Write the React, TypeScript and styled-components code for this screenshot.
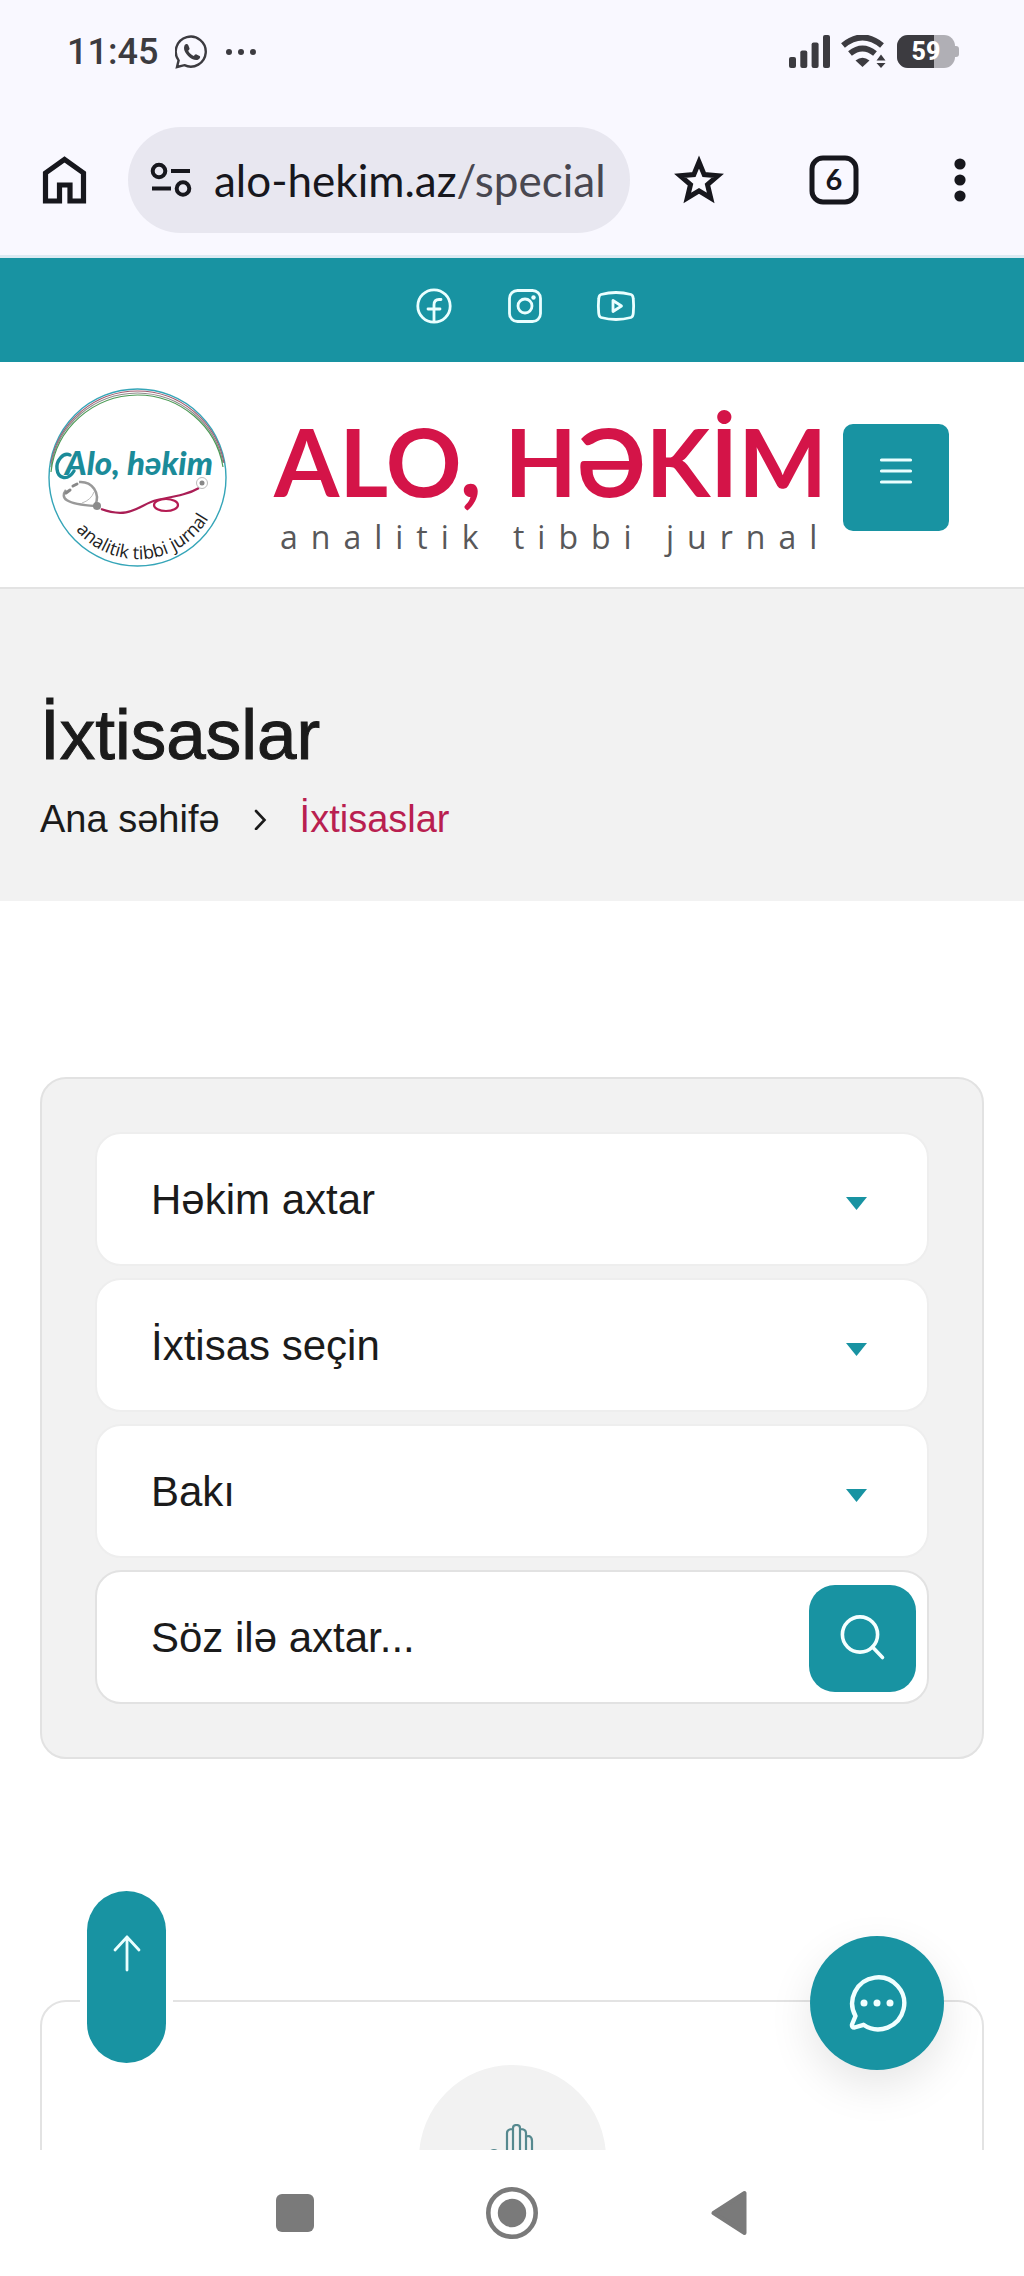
import React, { useState } from "react";
import styled, { createGlobalStyle } from "styled-components";

const teal = "#1893a2";
const ink = "#1b1b1b";
const crimson = "#d41448";

const GlobalStyle = createGlobalStyle`
  * {
    box-sizing: border-box;
  }

  body {
    margin: 0;
    background: #fff;
    color: ${ink};
    font-family: "Liberation Sans", Arial, sans-serif;
  }

  button {
    border: 0;
    padding: 0;
    background: none;
    color: inherit;
    font: inherit;
    cursor: pointer;
  }

  a {
    color: inherit;
    text-decoration: none;
  }

  svg {
    display: block;
    flex: none;
  }
`;

const Screen = styled.div`
  display: flex;
  flex-direction: column;
  height: 100vh;
`;

const StatusBar = styled.div`
  display: flex;
  flex: none;
  align-items: center;
  justify-content: space-between;
  height: 103px;
  padding: 0 65px 0 67px;
  background: #f9f8ff;
  color: #3c3b40;
`;

const StatusGroup = styled.div`
  display: flex;
  align-items: center;
  gap: ${({ $gap }: { $gap: number }) => $gap}px;
`;

const Clock = styled.span`
  font: 500 36px/40px Roboto, sans-serif;
`;

const BrowserBar = styled.div`
  display: flex;
  flex: none;
  align-items: center;
  height: 155px;
  padding: 2px 46px 0 40px;
  border-bottom: 3px solid #dceaf2;
  background: #f9f8ff;
  color: #17171d;
`;

const BrowserButton = styled.button`
  display: flex;
  flex: none;
  align-items: center;
  justify-content: center;
`;

const BrowserActions = styled.div`
  display: flex;
  flex: none;
  align-items: center;
  gap: 83px;
  margin-left: 42px;
`;

const AddressBar = styled.button`
  display: flex;
  flex: 1;
  align-items: center;
  gap: 22px;
  min-width: 0;
  height: 106px;
  margin-left: 38px;
  padding: 0 22px;
  overflow: hidden;
  border-radius: 53px;
  background: #e8e7f0;
  font: 400 44px/56px Lato, sans-serif;
  white-space: nowrap;
`;

const UrlPath = styled.span`
  color: #484750;
`;

const Page = styled.div`
  position: relative;
  flex: 1;
  min-height: 0;
  overflow: hidden;
`;

const TopBar = styled.div`
  display: flex;
  align-items: center;
  justify-content: center;
  gap: 51px;
  height: 104px;
  padding: 0 0 8px 26px;
  background: ${teal};
  color: #eaffff;
`;

const Header = styled.header`
  display: flex;
  align-items: center;
  justify-content: space-between;
  height: 227px;
  padding: 6px 75px 0 47px;
  border-bottom: 2px solid #e3e3e3;
`;

const Brand = styled.a`
  display: flex;
  align-items: center;
  gap: 46px;
`;

const Wordmark = styled.div`
  display: flex;
  flex-direction: column;
  gap: 4px;
  padding-top: 14px;
  white-space: nowrap;
`;

const BrandName = styled.span`
  color: ${crimson};
  font: 700 94px/100px Lato, sans-serif;
`;

const BrandTagline = styled.span`
  padding-left: 6px;
  color: #58585a;
  font: 400 32px/44px "Open Sans", sans-serif;
  letter-spacing: 13px;
`;

const MenuButton = styled.button`
  display: flex;
  flex: none;
  align-items: center;
  justify-content: center;
  width: 106px;
  height: 107px;
  padding-bottom: 14px;
  border-radius: 10px;
  background: ${teal};
  color: #eaffff;
`;

const Hero = styled.section`
  padding: 104px 40px 55px;
  background: #f2f2f2;
`;

const Title = styled.h1`
  margin: 0 0 15px;
  font-size: 71px;
  font-weight: 400;
  line-height: 84px;
  -webkit-text-stroke: 1px currentColor;
`;

const Breadcrumb = styled.nav`
  display: flex;
  align-items: center;
  gap: 33px;
  font-size: 38px;
  line-height: 54px;
`;

const Current = styled.span`
  color: #b91f50;
`;

const Main = styled.main`
  padding: 176px 40px 0;
`;

const SearchPanel = styled.form`
  display: flex;
  flex-direction: column;
  gap: 12px;
  padding: 53px;
  border: 2px solid #e2e2e2;
  border-radius: 26px;
  background: #f2f2f2;
`;

const SelectBox = styled.div`
  display: grid;
  align-items: center;

  > * {
    grid-area: 1 / 1;
  }

  > svg {
    justify-self: end;
    margin: 9px 62px 0 0;
    pointer-events: none;
  }
`;

const Select = styled.select`
  appearance: none;
  width: 100%;
  height: 134px;
  padding: 2px 100px 0 54px;
  border: 2px solid #eee;
  border-radius: 26px;
  background: #fff;
  color: ${ink};
  font: 400 42px/54px "Liberation Sans", Arial, sans-serif;
`;

const SearchField = styled.div`
  display: flex;
  align-items: center;
  height: 134px;
  padding: 2px 11px 0 54px;
  border: 2px solid #e2e2e2;
  border-radius: 26px;
  background: #fff;
`;

const SearchInput = styled.input`
  flex: 1;
  min-width: 0;
  padding: 0;
  border: 0;
  outline: 0;
  background: none;
  color: ${ink};
  font: 400 42px/54px "Liberation Sans", Arial, sans-serif;

  &::placeholder {
    color: ${ink};
    opacity: 1;
  }
`;

const SearchButton = styled.button`
  display: flex;
  flex: none;
  align-items: center;
  justify-content: center;
  width: 107px;
  height: 107px;
  border-radius: 26px;
  background: ${teal};
  color: #f4ffff;
`;

const SpecialtyCard = styled.article`
  display: flex;
  justify-content: center;
  height: 420px;
  margin-top: 241px;
  padding-top: 63px;
  border: 2px solid #e3e3e3;
  border-radius: 26px;
`;

const SpecialtyIcon = styled.div`
  display: flex;
  align-items: center;
  justify-content: center;
  width: 187px;
  height: 187px;
  padding-top: 6px;
  border-radius: 50%;
  background: #f2f2f2;
`;

const ScrollTop = styled.button`
  position: absolute;
  bottom: 87px;
  left: 87px;
  display: flex;
  justify-content: center;
  width: 79px;
  height: 172px;
  padding-top: 44px;
  border-radius: 40px;
  background: ${teal};
  box-shadow: 0 0 0 7px #fff;
  color: #eaffff;
`;

const ChatButton = styled.button`
  position: absolute;
  right: 80px;
  bottom: 80px;
  display: flex;
  align-items: center;
  justify-content: center;
  width: 134px;
  height: 134px;
  border-radius: 50%;
  background: ${teal};
  box-shadow: 0 16px 44px rgba(0, 0, 0, 0.1);
  color: #f0ffff;
`;

const SystemNav = styled.nav`
  display: flex;
  flex: none;
  align-items: center;
  justify-content: center;
  gap: 157px;
  height: 126px;
  background: #fff;
  color: #7a7a7a;
`;

const SystemButton = styled.button`
  display: flex;
  align-items: center;
  justify-content: center;
  width: 60px;
  height: 60px;
`;

const WhatsAppIcon = () => (
  <svg width="34" height="34" viewBox="0 0 34 34" fill="none">
    <path
      d="M2 32 3.6 25.4A15 15 0 1 1 9.4 30.2Z"
      stroke="currentColor"
      strokeWidth="2.4"
    />
    <path
      d="M9.5 10.5c1-2 3-2 3.8-.3l1.2 3c.4 1-.9 2-1.3 2.6 1.2 2.4 3 4 5.6 5.1.8-.6 1.5-2 2.7-1.5l3.1 1.5c1.5.8-.3 3.6-2.3 4.1-5.2 1-13.5-6.5-13.3-12 .1-1 .2-1.8.5-2.5Z"
      fill="currentColor"
    />
  </svg>
);

const DotsIcon = () => (
  <svg width="30" height="8" viewBox="0 0 30 8" fill="currentColor">
    <circle cx="3" cy="4" r="3" />
    <circle cx="15" cy="4" r="3" />
    <circle cx="27" cy="4" r="3" />
  </svg>
);

const SignalIcon = () => (
  <svg width="42" height="33" viewBox="0 0 42 33" fill="currentColor">
    <rect y="22" width="7" height="11" rx="2" />
    <rect x="11.3" y="15.5" width="7" height="17.5" rx="2" />
    <rect x="22.6" y="7.5" width="7" height="25.5" rx="2" />
    <rect x="34" width="7" height="33" rx="2" />
  </svg>
);

const WifiIcon = () => (
  <svg width="46" height="33" viewBox="0 0 46 33" fill="none">
    <path d="M2 10.5Q21.5-5.5 41 10.5" stroke="currentColor" strokeWidth="6" />
    <path d="M9 18.5Q21.5 8.5 34 18.5" stroke="currentColor" strokeWidth="6" />
    <path d="M14.5 25.5Q21.500 20 28.5 25.5L21.5 32Z" fill="currentColor" />
    <path d="M35.5 25.5 40 19.5 44.5 25.5ZM35.5 28 40 33 44.5 28Z" fill="currentColor" />
  </svg>
);

const BatteryIcon = () => (
  <svg width="62" height="33" viewBox="0 0 62 33">
    <path d="M58 11h1a3 3 0 0 1 3 3v5a3 3 0 0 1-3 3h-1Z" fill="#b0afb5" />
    <rect width="58" height="33" rx="11" fill="#b0afb5" />
    <path d="M11 0H37V33H11A11 11 0 0 1 0 22V11A11 11 0 0 1 11 0Z" fill="#3c3b40" />
    <text x="29" y="25" fill="#fff" fontFamily="Roboto" fontSize="25" fontWeight="800" textAnchor="middle">
      59
    </text>
  </svg>
);

const HomeIcon = () => (
  <svg width="50" height="50" viewBox="0 0 50 50" fill="none" stroke="currentColor" strokeWidth="5.2">
    <path d="M5.5 46V18L24.5 4.5 43.5 18V46H30V30H19.5V46Z" />
  </svg>
);

const TuneIcon = () => (
  <svg width="42" height="36" viewBox="0 0 42 36" fill="none" stroke="currentColor" strokeWidth="4">
    <circle cx="9" cy="9" r="6.3" />
    <circle cx="33" cy="26.5" r="6.3" />
    <path d="M21 9H40M2 26.5H21" />
  </svg>
);

const StarIcon = () => (
  <svg width="54" height="52" viewBox="0 0 54 52" fill="none" stroke="currentColor" strokeWidth="5">
    <path d="m27 8 5.2 12.6 13.600 1.100-10.300 8.900 3.200 13.300L27 36.800 15.300 43.900l3.200-13.300-10.300-8.900 13.600-1.100Z" />
  </svg>
);

const TabsIcon = () => (
  <svg width="50" height="50" viewBox="0 0 50 50" fill="none">
    <rect x="3" y="3" width="44" height="44" rx="11" stroke="currentColor" strokeWidth="5" />
    <text x="25" y="35" fill="currentColor" fontFamily="Lato" fontSize="29" fontWeight="700" textAnchor="middle">
      6
    </text>
  </svg>
);

const MoreIcon = () => (
  <svg width="36" height="46" viewBox="0 0 36 46" fill="currentColor">
    <circle cx="18" cy="7" r="5.6" />
    <circle cx="18" cy="23" r="5.6" />
    <circle cx="18" cy="39" r="5.6" />
  </svg>
);

const FacebookIcon = () => (
  <svg width="40" height="40" viewBox="0 0 40 40" fill="none" stroke="currentColor" strokeWidth="2.8" strokeLinecap="round">
    <circle cx="20" cy="20" r="16.2" />
    <path d="M27 13.5H25Q20 13.5 20 19V35.5M14 23H26" />
  </svg>
);

const InstagramIcon = () => (
  <svg width="40" height="40" viewBox="0 0 40 40" fill="none" stroke="currentColor" strokeWidth="2.8">
    <rect x="4.5" y="4.5" width="31" height="31" rx="8" />
    <circle cx="20" cy="20" r="7" />
    <circle cx="28.5" cy="11.5" r="2.2" fill="currentColor" stroke="none" />
  </svg>
);

const YoutubeIcon = () => (
  <svg width="40" height="40" viewBox="0 0 40 40" fill="none" stroke="currentColor" strokeWidth="2.8" strokeLinejoin="round">
    <path d="M5 8.5Q20 4.5 35 8.5Q37 9 37.3 13Q38 20 37.3 27Q37 31 35 31.5Q20 35.5 5 31.5Q3 31 2.7 27Q2 20 2.7 13Q3 9 5 8.500Z" />
    <path d="M17 14.5V25.5L25.5 20Z" />
  </svg>
);

const Emblem = () => (
  <svg width="181" height="181" viewBox="0 0 181 181" fill="none">
    <defs>
      <path id="tagline-arc" d="M29 143A81 81 0 0 0 170 110" />
    </defs>
    <circle cx="90.5" cy="90.5" r="88.5" stroke="#35a5b8" strokeWidth="1.4" />
    <path d="M4 76A88 88 0 0 1 90.5 4A88 88 0 0 1 177 76" stroke="#a05a6e" strokeWidth="1.2" />
    <path d="M4 80A88 86 0 0 1 90.5 6A88 86 0 0 1 176 76" stroke="#8a8a8a" strokeWidth="1.2" />
    <path d="M4 85A88 86 0 0 1 90.5 8A87 86 0 0 1 176 80" stroke="#4b9a55" strokeWidth="1.2" />
    <text x="18" y="88" fill="#1b8b99" fontFamily="Lato" fontSize="33" fontStyle="italic" fontWeight="900">
      Alo, həkim
    </text>
    <path
      d="M23 68C16 65 9 74 10 82 11 92 21 94 27 84"
      stroke="#1b8b99"
      strokeWidth="3.4"
      strokeLinecap="round"
    />
    <path d="M19 103C13 111 18 117 48 119C54 106 45 94 32 95" stroke="#999" strokeWidth="2.5" />
    <path d="M35 116Q44 113 47 105" stroke="#bbb" />
    <path d="m19 106 4-3M26 99l4-2" stroke="#888" strokeWidth="3" strokeLinecap="round" />
    <circle cx="50" cy="119" r="4" fill="#8b8b8b" />
    <path d="M54 122C84 133 93 117 110 113C130 109 142 107 152 101" stroke="#aa1e55" strokeWidth="2.2" />
    <ellipse cx="119" cy="118" rx="12" ry="6" stroke="#b51c53" strokeWidth="2.2" />
    <circle cx="155" cy="96" r="5.5" stroke="#bbb" />
    <circle cx="155" cy="96" r="2.5" fill="#888" />
    <text fill="#222" fontFamily="Open Sans" fontSize="18">
      <textPath href="#tagline-arc">analitik tibbi jurnal</textPath>
    </text>
  </svg>
);

const MenuIcon = () => (
  <svg width="36" height="30" viewBox="0 0 36 30" stroke="currentColor" strokeWidth="3.2" strokeLinecap="round">
    <path d="M3.5 4H32.5M3.5 15H32.5M3.5 26H32.5" />
  </svg>
);

const ChevronIcon = () => (
  <svg width="14" height="22" viewBox="0 0 14 22" fill="none" stroke={ink} strokeWidth="2.6" strokeLinecap="round">
    <path d="m3 3 8.500 9L3 21" />
  </svg>
);

const CaretIcon = () => (
  <svg width="21" height="13" viewBox="0 0 21 13" fill={teal}>
    <path d="M0 0H21L10.5 13Z" />
  </svg>
);

const SearchIcon = () => (
  <svg width="48" height="48" viewBox="0 0 48 48" fill="none" stroke="currentColor" strokeWidth="3.6" strokeLinecap="round">
    <circle cx="21" cy="20.5" r="17.6" />
    <path d="m33.500 33 10 10.500" />
  </svg>
);

const HandIcon = () => (
  <svg width="64" height="76" viewBox="0 0 64 76" fill="none" stroke="#56898f" strokeWidth="2.2">
    <path d="M27 44V9Q27 5 33 5M33 44V4Q33 1 36.5 1T40 4V44M40 5Q46 5 46 9V44M46 13Q47 12 49 12Q52 13 52 17V52Q50 66 40 66H30" />
    <path d="M8 30Q14 22 20 30L27 44" />
  </svg>
);

const ArrowUpIcon = () => (
  <svg width="30" height="38" viewBox="0 0 30 38" fill="none" stroke="currentColor" strokeWidth="2.8" strokeLinecap="round" strokeLinejoin="round">
    <path d="M15 2V35M3 15 15 2 27 15" />
  </svg>
);

const ChatIcon = () => (
  <svg width="60" height="60" viewBox="0 0 60 60" fill="none">
    <path
      d="M8.5 43A26 26 0 1 1 16.5 51.8L7.5 54.5Q4.5 54.5 5 51.5Z"
      stroke="currentColor"
      strokeWidth="4.4"
      strokeLinejoin="round"
    />
    <circle cx="17" cy="30" r="3.5" fill="currentColor" />
    <circle cx="30" cy="30" r="3.5" fill="currentColor" />
    <circle cx="43" cy="30" r="3.5" fill="currentColor" />
  </svg>
);

const filters = [
  { label: "Həkim", options: ["Həkim axtar"] },
  { label: "İxtisas", options: ["İxtisas seçin"] },
  { label: "Şəhər", options: ["Bakı"] },
];

const socials = [
  { label: "Facebook", Icon: FacebookIcon },
  { label: "Instagram", Icon: InstagramIcon },
  { label: "YouTube", Icon: YoutubeIcon },
];

const App = () => {
  const [query, setQuery] = useState("");

  return (
    <Screen>
      <GlobalStyle />
      <StatusBar>
        <StatusGroup $gap={17}>
          <Clock>11:45</Clock>
          <WhatsAppIcon />
          <DotsIcon />
        </StatusGroup>
        <StatusGroup $gap={10}>
          <SignalIcon />
          <WifiIcon />
          <BatteryIcon />
        </StatusGroup>
      </StatusBar>

      <BrowserBar>
        <BrowserButton aria-label="Home">
          <HomeIcon />
        </BrowserButton>
        <AddressBar>
          <TuneIcon />
          <span>
            alo-hekim.az<UrlPath>/special</UrlPath>
          </span>
        </AddressBar>
        <BrowserActions>
          <BrowserButton aria-label="Bookmark">
            <StarIcon />
          </BrowserButton>
          <BrowserButton aria-label="Tabs">
            <TabsIcon />
          </BrowserButton>
          <BrowserButton aria-label="More">
            <MoreIcon />
          </BrowserButton>
        </BrowserActions>
      </BrowserBar>

      <Page>
        <TopBar>
          {socials.map(({ label, Icon }) => (
            <a key={label} href="#" aria-label={label}>
              <Icon />
            </a>
          ))}
        </TopBar>

        <Header>
          <Brand href="#">
            <Emblem />
            <Wordmark>
              <BrandName>ALO, HƏKİM</BrandName>
              <BrandTagline>analitik tibbi jurnal</BrandTagline>
            </Wordmark>
          </Brand>
          <MenuButton aria-label="Menyu">
            <MenuIcon />
          </MenuButton>
        </Header>

        <Hero>
          <Title>İxtisaslar</Title>
          <Breadcrumb>
            <a href="#">Ana səhifə</a>
            <ChevronIcon />
            <Current>İxtisaslar</Current>
          </Breadcrumb>
        </Hero>

        <Main>
          <SearchPanel onSubmit={(e) => e.preventDefault()}>
            {filters.map(({ label, options }) => (
              <SelectBox key={label}>
                <Select aria-label={label}>
                  {options.map((option) => (
                    <option key={option}>{option}</option>
                  ))}
                </Select>
                <CaretIcon />
              </SelectBox>
            ))}
            <SearchField>
              <SearchInput
                aria-label="Söz ilə axtar"
                placeholder="Söz ilə axtar..."
                value={query}
                onChange={(e) => setQuery(e.target.value)}
              />
              <SearchButton type="submit" aria-label="Axtar">
                <SearchIcon />
              </SearchButton>
            </SearchField>
          </SearchPanel>

          <SpecialtyCard>
            <SpecialtyIcon>
              <HandIcon />
            </SpecialtyIcon>
          </SpecialtyCard>
        </Main>

        <ScrollTop aria-label="Yuxarı">
          <ArrowUpIcon />
        </ScrollTop>
        <ChatButton aria-label="Mesaj yaz">
          <ChatIcon />
        </ChatButton>
      </Page>

      <SystemNav>
        <SystemButton aria-label="Recent apps">
          <svg width="38" height="38" viewBox="0 0 38 38" fill="currentColor">
            <rect width="38" height="38" rx="6" />
          </svg>
        </SystemButton>
        <SystemButton aria-label="Home screen">
          <svg width="52" height="52" viewBox="0 0 52 52" fill="none">
            <circle cx="26" cy="26" r="23.7" stroke="currentColor" strokeWidth="4.6" />
            <circle cx="26" cy="26" r="14.2" fill="currentColor" />
          </svg>
        </SystemButton>
        <SystemButton aria-label="Back">
          <svg width="36" height="46" viewBox="0 0 36 46" fill="currentColor">
            <path
              d="M2.5 23 33.5 3V43Z"
              stroke="currentColor"
              strokeWidth="4"
              strokeLinejoin="round"
            />
          </svg>
        </SystemButton>
      </SystemNav>
    </Screen>
  );
};

export default App;
